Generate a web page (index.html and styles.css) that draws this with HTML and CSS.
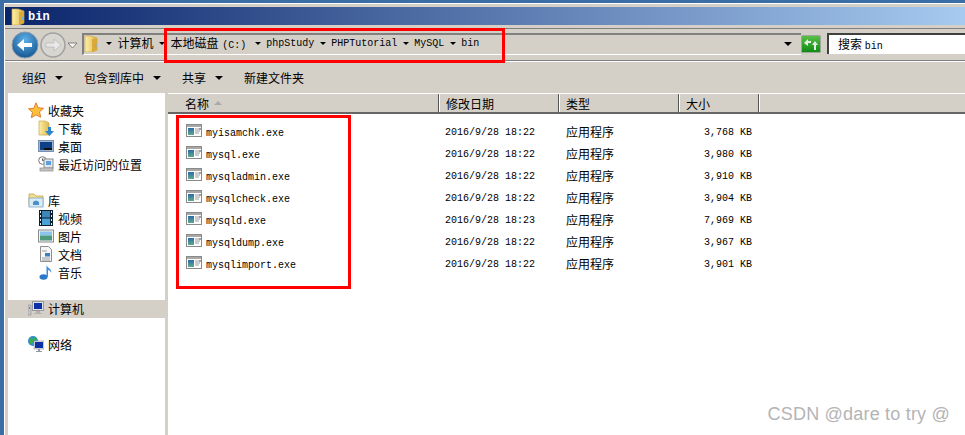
FILE: index.html
```html
<!DOCTYPE html>
<html lang="zh-CN">
<head>
<meta charset="utf-8">
<title>bin</title>
<link rel="stylesheet" href="styles.css">
</head>
<body>
<svg class="defs" width="0" height="0">
  <defs>
    <linearGradient id="fold" x1="0" y1="0" x2="1" y2="0"><stop offset="0" stop-color="#fdf0a8"/><stop offset="1" stop-color="#e0b84e"/></linearGradient>
    <linearGradient id="app" x1="0" y1="0" x2="0" y2="1"><stop offset="0" stop-color="#2f6aa8"/><stop offset="1" stop-color="#5fa98a"/></linearGradient>
    <radialGradient id="back" cx=".5" cy=".3" r=".8"><stop offset="0" stop-color="#5fb0e8"/><stop offset="1" stop-color="#0a4a86"/></radialGradient>
    <linearGradient id="go" x1="0" y1="0" x2="0" y2="1"><stop offset="0" stop-color="#5cc04a"/><stop offset="1" stop-color="#0c8a12"/></linearGradient>
    <symbol id="i-folderv" viewBox="0 0 14 17"><path d="M1 1h6l6 2v12l-5 2H1z" fill="url(#fold)" stroke="#c9a544" stroke-width=".7"/><path d="M8 4l5-1v12l-5 2z" fill="#d9a93a"/><path d="M11 9h1.500v3H11z" fill="#6fb0dc"/></symbol>
    <symbol id="i-app" viewBox="0 0 16 13"><rect x=".5" y=".5" width="15" height="12" fill="#fff" stroke="#8a8a8a"/><rect x="1" y="1" width="14" height="2" fill="#a8a8a8"/><rect x="2" y="4" width="6" height="7" fill="url(#app)"/><path d="M9 5h4M9 7h5M9 9h4" stroke="#9a9a9a"/><path d="M14 4v2" stroke="#444"/></symbol>
    <symbol id="i-star" viewBox="0 0 16 16"><path d="M8 .8l2.200 5 5.300.5-4 3.500 1.200 5.400L8 12.800l-4.700 2.900 1.200-5.400-4-3.500 5.300-.5z" fill="#fbc13c" stroke="#e07c28"/></symbol>
    <symbol id="i-down" viewBox="0 0 16 16"><path d="M1 1h6l4 2v12H1z" fill="url(#fold)" stroke="#c9a544" stroke-width=".7"/><path d="M10 7h3v4h3l-4.500 5L7 11h3z" fill="#2a86d0"/></symbol>
    <symbol id="i-desk" viewBox="0 0 16 12"><rect x=".5" y=".5" width="15" height="11" fill="#9db6d4" stroke="#7890ae"/><rect x="2" y="2" width="12" height="8" fill="#0f3f86"/><rect x="6" y="8" width="8" height="2" fill="#111"/></symbol>
    <symbol id="i-recent" viewBox="0 0 16 16"><circle cx="4.500" cy="4.500" r="3.800" fill="#fff" stroke="#777"/><path d="M4.500 2.500v2h2" stroke="#555" fill="none"/><rect x="6" y="3" width="9" height="9" fill="#dfe6ee" stroke="#8c8c8c"/><rect x="8" y="5" width="5" height="4" fill="#5aa0e0"/><rect x="2" y="12" width="13" height="3" fill="#c4c4c4" stroke="#8c8c8c" stroke-width=".7"/></symbol>
    <symbol id="i-lib" viewBox="0 0 16 16"><path d="M1 14V2h5l2 2h7v10z" fill="#f3dd8e" stroke="#c2a552" stroke-width=".8"/><rect x="1" y="6" width="14" height="9" fill="#d8ecf8" stroke="#7ea6c4" stroke-width=".8"/><path d="M5 13V10q3-3 6 0v3z" fill="#4f8fc8"/></symbol>
    <symbol id="i-video" viewBox="0 0 14 16"><rect width="14" height="16" fill="#0d2030"/><rect x="3" y="1" width="8" height="6.500" fill="#3f86b8"/><rect x="3" y="8.500" width="8" height="6.500" fill="#4aa0d8"/><path d="M1 1h1v2H1zM1 5h1v2H1zM1 9h1v2H1zM1 13h1v2H1zM12 1h1v2h-1zM12 5h1v2h-1zM12 9h1v2h-1zM12 13h1v2h-1z" fill="#e8e8e8"/></symbol>
    <symbol id="i-pic" viewBox="0 0 16 13"><rect x=".5" y=".5" width="15" height="12" fill="#f2f2f2" stroke="#8a8a8a"/><rect x="2" y="2" width="12" height="4" fill="#8ac4ea"/><rect x="2" y="6" width="12" height="5" fill="#4f9a7c"/></symbol>
    <symbol id="i-doc" viewBox="0 0 12 16"><path d="M.5.500h8l3 3v12H.5z" fill="#f4f6f8" stroke="#8d8d8d"/><path d="M2 5h5M2 12h8M2 14h8" stroke="#9a9a9a"/><rect x="5" y="7" width="5" height="3.500" fill="#3f7fb8"/></symbol>
    <symbol id="i-music" viewBox="0 0 14 16"><ellipse cx="4.500" cy="13" rx="4" ry="2.800" fill="#2a78c8"/><path d="M7.500 13V1c1 3 5 3.500 5 8-1-2-2.500-3-3.500-3v7z" fill="#3a90dc"/></symbol>
    <symbol id="i-pc" viewBox="0 0 16 14"><rect x="0" y="4" width="3" height="10" fill="#c8c8c8" stroke="#8a8a8a" stroke-width=".6"/><rect x="1" y="6" width="1" height="2" fill="#40b040"/><rect x="4.500" y=".5" width="11" height="9" fill="#dfe4ea" stroke="#9a9a9a"/><rect x="6" y="2" width="8" height="6" fill="#0d2fa8"/><path d="M8 10h4v2h2v1H6v-1h2z" fill="#b0b0b0"/></symbol>
    <symbol id="i-net" viewBox="0 0 16 16"><circle cx="5" cy="5" r="5" fill="#2f8fd0"/><path d="M2 2q3 0 3 3t-3 3zM6 1q3 1 3 3H6z" fill="#3cae4a"/><rect x="6" y="5" width="10" height="8" fill="#dfe4ea" stroke="#9a9a9a" stroke-width=".7"/><rect x="7" y="6" width="8" height="6" fill="#0d2fa8"/><path d="M10 13h2v2h2v1H8v-1h2z" fill="#8f9aa8"/></symbol>
  </defs>
</svg>

<div class="desktop">
  <div class="window">
    <div class="titlebar">
      <svg class="ico-title"><use href="#i-folderv"/></svg>
      <span class="title-text">bin</span>
    </div>

    <div class="navbar">
      <svg class="nav-btns" viewBox="0 0 70 30">
        <circle cx="14" cy="15" r="13" fill="url(#back)" stroke="#8a9aaa"/>
        <path d="M6 15l7-6v4h8v4h-8v4z" fill="#fff"/>
        <circle cx="42" cy="15" r="12" fill="#d8d6d0" stroke="#a0a0a0" stroke-width="1.500"/>
        <path d="M50 15l-7-6v4h-8v4h8v4z" fill="#e8e8e8" stroke="#b4b4b4" stroke-width=".7"/>
        <path d="M57 13h9l-4.500 5z" fill="#f4f4f4" stroke="#777" stroke-width=".9"/>
      </svg>
      <div class="address">
        <svg class="ico-addr"><use href="#i-folderv"/></svg>
        <i class="caret c-first"></i>
        <span class="crumb cjk">计算机</span>
        <i class="caret"></i>
        <span class="crumb cjk">本地磁盘 <span class="m drive">(C:)</span></span>
        <i class="caret"></i>
        <span class="crumb m">phpStudy</span>
        <i class="caret"></i>
        <span class="crumb m">PHPTutorial</span>
        <i class="caret"></i>
        <span class="crumb m">MySQL</span>
        <i class="caret"></i>
        <span class="crumb m">bin</span>
        <i class="caret caret-end"></i>
      </div>
      <svg class="go" viewBox="0 0 20 18">
        <rect x=".5" y=".5" width="19" height="17" rx="1" fill="url(#go)" stroke="#9aa89a"/>
        <path d="M3 8l4-4v2h3v2H7v3zM17 10l-3-4-3 4h2v5h2v-5z" fill="#e6ece6"/>
      </svg>
      <div class="search"><span>搜索</span> <span class="m">bin</span></div>
    </div>

    <div class="toolbar">
      <span class="tool t1">组织<i class="caret big"></i></span>
      <span class="tool t2">包含到库中<i class="caret big"></i></span>
      <span class="tool t3">共享<i class="caret big"></i></span>
      <span class="tool">新建文件夹</span>
    </div>

    <div class="main">
      <nav class="side">
        <div class="item top"><svg class="ico"><use href="#i-star"/></svg>收藏夹</div>
        <div class="item sub"><svg class="ico"><use href="#i-down"/></svg>下载</div>
        <div class="item sub"><svg class="ico"><use href="#i-desk"/></svg>桌面</div>
        <div class="item sub"><svg class="ico"><use href="#i-recent"/></svg>最近访问的位置</div>
        <div class="gap"></div>
        <div class="item top"><svg class="ico"><use href="#i-lib"/></svg>库</div>
        <div class="item sub"><svg class="ico"><use href="#i-video"/></svg>视频</div>
        <div class="item sub"><svg class="ico"><use href="#i-pic"/></svg>图片</div>
        <div class="item sub"><svg class="ico"><use href="#i-doc"/></svg>文档</div>
        <div class="item sub"><svg class="ico"><use href="#i-music"/></svg>音乐</div>
        <div class="gap"></div>
        <div class="item top selected"><svg class="ico"><use href="#i-pc"/></svg>计算机</div>
        <div class="gap"></div>
        <div class="item top"><svg class="ico"><use href="#i-net"/></svg>网络</div>
      </nav>

      <section class="files">
        <div class="head">
          <div class="hc hc-name">名称<i class="sort"></i></div>
          <div class="hc">修改日期</div>
          <div class="hc">类型</div>
          <div class="hc">大小</div>
        </div>
        <div class="rows">
          <div class="row"><div class="name m"><svg class="ico-app"><use href="#i-app"/></svg>myisamchk.exe</div><div class="date m">2016/9/28 18:22</div><div class="type">应用程序</div><div class="size m">3,768 KB</div></div>
          <div class="row"><div class="name m"><svg class="ico-app"><use href="#i-app"/></svg>mysql.exe</div><div class="date m">2016/9/28 18:22</div><div class="type">应用程序</div><div class="size m">3,980 KB</div></div>
          <div class="row"><div class="name m"><svg class="ico-app"><use href="#i-app"/></svg>mysqladmin.exe</div><div class="date m">2016/9/28 18:22</div><div class="type">应用程序</div><div class="size m">3,910 KB</div></div>
          <div class="row"><div class="name m"><svg class="ico-app"><use href="#i-app"/></svg>mysqlcheck.exe</div><div class="date m">2016/9/28 18:22</div><div class="type">应用程序</div><div class="size m">3,904 KB</div></div>
          <div class="row"><div class="name m"><svg class="ico-app"><use href="#i-app"/></svg>mysqld.exe</div><div class="date m">2016/9/28 18:23</div><div class="type">应用程序</div><div class="size m">7,969 KB</div></div>
          <div class="row"><div class="name m"><svg class="ico-app"><use href="#i-app"/></svg>mysqldump.exe</div><div class="date m">2016/9/28 18:22</div><div class="type">应用程序</div><div class="size m">3,967 KB</div></div>
          <div class="row"><div class="name m"><svg class="ico-app"><use href="#i-app"/></svg>mysqlimport.exe</div><div class="date m">2016/9/28 18:22</div><div class="type">应用程序</div><div class="size m">3,901 KB</div></div>
        </div>
      </section>
    </div>
  </div>

  <div class="mark mark-addr"></div>
  <div class="mark mark-list"></div>
  <div class="watermark">CSDN @dare to try @</div>
</div>
</body>
</html>
```
FILE: styles.css
```css
* { box-sizing: border-box; }
html, body { margin: 0; padding: 0; }
body {
  width: 965px;
  height: 435px;
  overflow: hidden;
  font-family: "Noto Sans CJK SC", "Liberation Sans", sans-serif;
  font-size: 12px;
  color: #000;
}
.defs { position: absolute; }
.m { font-family: "Liberation Mono", monospace; font-size: 10px; }

.desktop {
  position: relative;
  width: 965px;
  height: 435px;
  background: #3a6ea5;
  padding: 3px 0 0 4px;
}
.window {
  height: 432px;
  background: #d4d0c8;
  border-top: 1px solid #fff;
  border-left: 1px solid #fff;
  padding: 3px 0 0 3px;
  display: flex;
  flex-direction: column;
}

/* title bar */
.titlebar {
  height: 18px;
  margin-left: -3px;
  padding-left: 3px;
  flex: none;
  display: flex;
  align-items: center;
  background: linear-gradient(90deg, #0a246a, #a6caf0);
  color: #fff;
}
.ico-title { width: 14px; height: 17px; margin-left: 3px; margin-right: 3px; }
.title-text { font: bold 12px "Liberation Mono", monospace; padding-top: 1px; }

/* nav bar */
.navbar {
  height: 34px;
  margin-top: 3px;
  margin-left: -3px;
  padding-left: 3px;
  flex: none;
  display: flex;
  align-items: flex-start;
  border-top: 1px solid #808080;
  border-bottom: 1px solid #fff;
  box-shadow: inset 0 -1px 0 #808080;
}
.nav-btns { width: 70px; height: 30px; margin: 1px 0 0 3px; flex: none; }
.address {
  width: 719px;
  height: 22px;
  margin: 4px 0 0 1px;
  flex: none;
  display: flex;
  align-items: center;
  border-top: 2px solid #808080;
  border-left: 2px solid #808080;
  border-bottom: 1px solid #fff;
  padding-bottom: 3px;
}
.ico-addr { width: 14px; height: 17px; flex: none; }
.caret {
  display: block;
  flex: none;
  width: 0;
  height: 0;
  margin: 1px 5.500px 0;
  border: 3px solid transparent;
  border-top: 3px solid #000;
  border-bottom: 0;
}
.c-first { margin-left: 8px; }
.crumb { white-space: nowrap; }
.cjk { padding-bottom: 2px; }
.drive { margin: 0 3px 0 1px; }
.caret-end { margin-left: auto; margin-right: 9px; border-width: 4px 4px 0; }
.go { width: 20px; height: 18px; margin-top: 6px; flex: none; }
.search {
  margin: 4px 0 0 6px;
  flex: 1;
  height: 21px;
  background: #fff;
  border-top: 2px solid #404040;
  border-left: 2px solid #404040;
  padding-left: 9px;
  line-height: 18px;
  white-space: pre;
}

/* toolbar */
.toolbar {
  height: 31px;
  flex: none;
  display: flex;
  align-items: center;
  padding: 0 0 1px 14px;
}
.tool { display: flex; align-items: center; }
.t1 { margin-right: 21px; }
.t2 { margin-right: 21px; }
.t3 { margin-right: 21px; }
.caret.big { border-width: 4px 4px 0; margin: 1px 0 0 9px; }

/* main */
.main { flex: 1; min-height: 0; display: flex; }
.side {
  width: 157px;
  margin-right: 3px;
  flex: none;
  background: #fff;
  padding-top: 9px;
}
.item {
  height: 18px;
  padding-bottom: 2px;
  display: flex;
  align-items: center;
  white-space: nowrap;
}
.gap { height: 18px; }
.top { padding-left: 20px; }
.sub { padding-left: 30px; }
.selected { background: #d4d0c8; }
.ico { width: 16px; height: 16px; margin-right: 4px; flex: none; }

.files { flex: 1; background: #fff; }
.head {
  height: 21px;
  display: grid;
  grid-template-columns: 272px 120px 120px 80px;
  background: #d4d0c8;
  border-top: 1px solid #fff;
  border-bottom: 2px solid #666;
}
.hc {
  display: flex;
  align-items: center;
  padding-left: 6px;
  border-right: 1px solid #fff;
  box-shadow: inset -1px 0 0 #555;
}
.hc-name { padding-left: 17px; }
.sort {
  width: 0;
  height: 0;
  margin-left: 5px;
  border: 4px solid transparent;
  border-bottom: 4px solid #aaa;
  border-top: 0;
}

.rows { padding-top: 7px; }
.row {
  height: 22px;
  display: grid;
  grid-template-columns: 272px 120px 120px 80px;
  align-items: center;
}
.name { display: flex; align-items: center; padding: 2px 0 0 18px; }
.ico-app { width: 16px; height: 13px; margin-right: 4px; margin-top: -5px; flex: none; }
.date { padding-left: 5px; }
.type { padding: 0 0 2px 6px; }
.size { text-align: right; padding-right: 8px; }

/* overlays */
.mark { position: absolute; border: 3px solid #f00; }
.mark-addr { left: 164px; top: 28px; width: 341px; height: 35px; }
.mark-list { left: 176px; top: 115px; width: 175px; height: 174px; }
.watermark {
  position: absolute;
  right: 15px;
  top: 404px;
  font: 18px "Liberation Sans", sans-serif;
  letter-spacing: .2px;
  color: #b4b4b4;
  white-space: nowrap;
}
```
